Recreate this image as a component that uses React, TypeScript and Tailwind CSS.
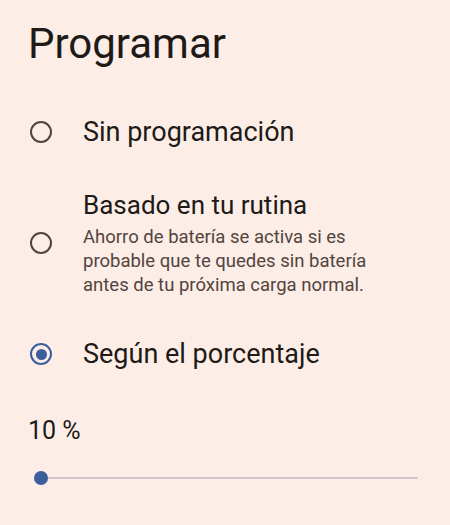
import React from "react";

function Radio({ checked }: { checked?: boolean }) {
  return (
    <div
      className={
        "w-[22px] h-[22px] rounded-full border-[2.5px] flex items-center justify-center shrink-0 " +
        (checked ? "border-[#3b5f9d]" : "border-[#4f4540]")
      }
    >
      {checked && <div className="w-[11px] h-[11px] rounded-full bg-[#3b5f9d]" />}
    </div>
  );
}

export default function App() {
  return (
    <div
      className="w-full h-[525px] bg-[#fdede7] text-[#201a17] overflow-hidden"
      style={{ fontFamily: "Roboto, 'Noto Sans', sans-serif" }}
    >
      {/* Title */}
      <div className="h-[72px] pl-[28px] pt-[20px]">
        <h1 className="text-[42px] leading-[48px] font-normal">Programar</h1>
      </div>

      {/* Options */}
      <div className="flex flex-col">
        <div className="h-[120px] flex items-center gap-[31px] pl-[30px]">
          <Radio />
          <span className="text-[27px] leading-[32px]">Sin programación</span>
        </div>

        <div className="flex items-center gap-[31px] pl-[30px] mt-[-4px]">
          <Radio />
          <div className="flex flex-col">
            <span className="text-[26px] leading-[34px]">Basado en tu rutina</span>
            <span className="text-[18.5px] leading-[24px] text-[#52443d] mt-[3px]">
              Ahorro de batería se activa si es
              <br />
              probable que te quedes sin batería
              <br />
              antes de tu próxima carga normal.
            </span>
          </div>
        </div>

        <div className="h-[110px] flex items-center gap-[31px] pl-[30px] mt-[2px]">
          <Radio checked />
          <span className="text-[27px] leading-[32px]">Según el porcentaje</span>
        </div>
      </div>

      {/* Percentage slider */}
      <div className="pl-[28px] pr-[32px] mt-[7px]">
        <div className="text-[25px] leading-[30px]">10 %</div>
        <div className="relative h-[40px] mt-[12px] flex items-center ml-[6px]">
          <div className="h-[2px] w-full bg-[#d3c4ca] rounded-full" />
          <div className="absolute left-0 w-[14px] h-[14px] rounded-full bg-[#3b5f9d]" />
        </div>
      </div>
    </div>
  );
}
